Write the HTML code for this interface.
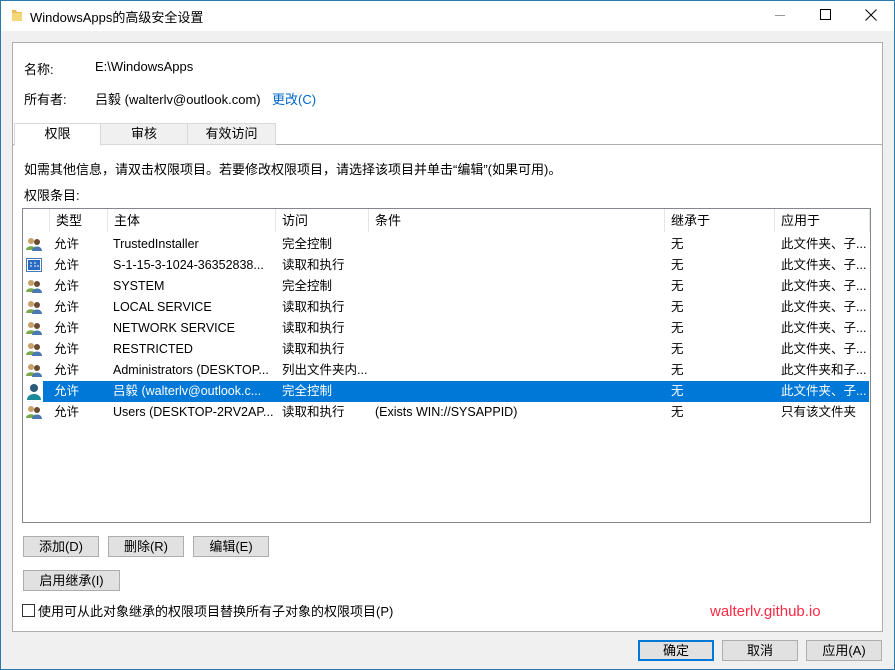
<!DOCTYPE html>
<html><head><meta charset="utf-8"><style>
*{box-sizing:border-box;margin:0;padding:0}
body{width:895px;height:670px;background:#f0f0f0;font-family:"Liberation Sans","Noto Sans CJK SC",sans-serif;font-size:13px;color:#000;position:relative;overflow:hidden}
.a{position:absolute;white-space:nowrap}
.win{position:absolute;left:0;top:0;width:895px;height:670px;border:1px solid #2b79a8}
.title{position:absolute;left:1px;top:1px;width:893px;height:30px;background:#fff}
.btn{position:absolute;height:21px;background:#e1e1e1;border:1px solid #adadad;text-align:center;line-height:19px}
.row{position:absolute;left:23px;width:846px;height:21px;line-height:21px;font-size:12.5px;white-space:nowrap}
.row span{position:absolute;white-space:nowrap}
.hd{position:absolute;top:0;height:23px;border-left:1px solid #e5e5e5;padding-left:6px;line-height:23px}
</style></head><body>
<div class="win"></div>
<div class="title"></div>
<svg class="a" style="left:11px;top:9px" width="12" height="13"><path d="M1 1h4l1 2h5v9H1z" fill="#e8c05a"/><path d="M1 4h10v8H1z" fill="#f5d77a"/></svg>
<div class="a" style="left:30px;top:7px">WindowsApps的高级安全设置</div>
<div class="a" style="left:775px;top:15px;width:10px;height:1px;background:#999"></div>
<div class="a" style="left:820px;top:9px;width:11px;height:11px;border:1px solid #000"></div>
<svg class="a" style="left:865px;top:9px" width="12" height="12"><path d="M0.5 0.5L11.5 11.5M11.5 0.5L0.5 11.5" stroke="#000" stroke-width="1"/></svg>

<div class="a" style="left:12px;top:42px;width:871px;height:590px;background:#fff;border:1px solid #adadad"></div>
<div class="a" style="left:24px;top:59px">名称:</div>
<div class="a" style="left:95px;top:59px">E:\WindowsApps</div>
<div class="a" style="left:24px;top:89px">所有者:</div>
<div class="a" style="left:95px;top:89px">吕毅 (walterlv@outlook.com)</div>
<div class="a" style="left:272px;top:89px;color:#0066cc">更改(C)</div>

<div class="a" style="left:13px;top:144px;width:869px;height:1px;background:#adadad"></div>
<div class="a" style="left:100px;top:123px;width:88px;height:22px;background:#f0f0f0;border:1px solid #d9d9d9;text-align:center;line-height:20px">审核</div>
<div class="a" style="left:187px;top:123px;width:89px;height:22px;background:#f0f0f0;border:1px solid #d9d9d9;text-align:center;line-height:20px">有效访问</div>
<div class="a" style="left:14px;top:123px;width:87px;height:23px;background:#fff;border:1px solid #d9d9d9;border-bottom:none;text-align:center;line-height:20px">权限</div>

<div class="a" style="left:24px;top:159px">如需其他信息，请双击权限项目。若要修改权限项目，请选择该项目并单击“编辑”(如果可用)。</div>
<div class="a" style="left:24px;top:185px">权限条目:</div>

<div class="a" style="left:22px;top:208px;width:849px;height:315px;background:#fff;border:1px solid #828790"></div>
<div class="a" style="left:23px;top:209px;width:847px;height:23px">
<div class="hd" style="left:26px;width:58px">类型</div>
<div class="hd" style="left:84px;width:169px">主体</div>
<div class="hd" style="left:252px;width:93px">访问</div>
<div class="hd" style="left:345px;width:296px">条件</div>
<div class="hd" style="left:641px;width:110px">继承于</div>
<div class="hd" style="left:751px;width:96px;border-right:1px solid #e5e5e5">应用于</div>
</div>

<div class="a" style="left:43px;top:381px;width:826px;height:21px;background:#0078d7"></div>

<div class="row" style="top:234px"><span style="left:3px;top:3px;width:16px;height:14px"><svg width="16" height="14"><circle cx="5" cy="4" r="3" fill="#c8a06a"/><path d="M0 13c0-5 10-5 10 0z" fill="#7aa84a"/><circle cx="11" cy="5" r="3" fill="#6a4a30"/><path d="M6 14c0-6 10-6 10 0z" fill="#4a78b0"/></svg></span><span style="left:31px">允许</span><span style="left:90px">TrustedInstaller</span><span style="left:259px">完全控制</span><span style="left:648px">无</span><span style="left:758px">此文件夹、子...</span></div>
<div class="row" style="top:255px"><span style="left:3px;top:3px"><svg width="16" height="14"><rect x="0.5" y="0.5" width="15" height="13" fill="#fff" stroke="#4a7ab0"/><rect x="2" y="2" width="12" height="10" fill="#2a6ac0"/><path d="M4 5h2M8 5h2M4 8h2M8 8h2M11 8h2" stroke="#fff"/></svg></span><span style="left:31px">允许</span><span style="left:90px">S-1-15-3-1024-36352838...</span><span style="left:259px">读取和执行</span><span style="left:648px">无</span><span style="left:758px">此文件夹、子...</span></div>
<div class="row" style="top:276px"><span style="left:3px;top:3px"><svg width="16" height="14"><circle cx="5" cy="4" r="3" fill="#c8a06a"/><path d="M0 13c0-5 10-5 10 0z" fill="#7aa84a"/><circle cx="11" cy="5" r="3" fill="#6a4a30"/><path d="M6 14c0-6 10-6 10 0z" fill="#4a78b0"/></svg></span><span style="left:31px">允许</span><span style="left:90px">SYSTEM</span><span style="left:259px">完全控制</span><span style="left:648px">无</span><span style="left:758px">此文件夹、子...</span></div>
<div class="row" style="top:297px"><span style="left:3px;top:3px"><svg width="16" height="14"><circle cx="5" cy="4" r="3" fill="#c8a06a"/><path d="M0 13c0-5 10-5 10 0z" fill="#7aa84a"/><circle cx="11" cy="5" r="3" fill="#6a4a30"/><path d="M6 14c0-6 10-6 10 0z" fill="#4a78b0"/></svg></span><span style="left:31px">允许</span><span style="left:90px">LOCAL SERVICE</span><span style="left:259px">读取和执行</span><span style="left:648px">无</span><span style="left:758px">此文件夹、子...</span></div>
<div class="row" style="top:318px"><span style="left:3px;top:3px"><svg width="16" height="14"><circle cx="5" cy="4" r="3" fill="#c8a06a"/><path d="M0 13c0-5 10-5 10 0z" fill="#7aa84a"/><circle cx="11" cy="5" r="3" fill="#6a4a30"/><path d="M6 14c0-6 10-6 10 0z" fill="#4a78b0"/></svg></span><span style="left:31px">允许</span><span style="left:90px">NETWORK SERVICE</span><span style="left:259px">读取和执行</span><span style="left:648px">无</span><span style="left:758px">此文件夹、子...</span></div>
<div class="row" style="top:339px"><span style="left:3px;top:3px"><svg width="16" height="14"><circle cx="5" cy="4" r="3" fill="#c8a06a"/><path d="M0 13c0-5 10-5 10 0z" fill="#7aa84a"/><circle cx="11" cy="5" r="3" fill="#6a4a30"/><path d="M6 14c0-6 10-6 10 0z" fill="#4a78b0"/></svg></span><span style="left:31px">允许</span><span style="left:90px">RESTRICTED</span><span style="left:259px">读取和执行</span><span style="left:648px">无</span><span style="left:758px">此文件夹、子...</span></div>
<div class="row" style="top:360px"><span style="left:3px;top:3px"><svg width="16" height="14"><circle cx="5" cy="4" r="3" fill="#c8a06a"/><path d="M0 13c0-5 10-5 10 0z" fill="#7aa84a"/><circle cx="11" cy="5" r="3" fill="#6a4a30"/><path d="M6 14c0-6 10-6 10 0z" fill="#4a78b0"/></svg></span><span style="left:31px">允许</span><span style="left:90px">Administrators (DESKTOP...</span><span style="left:259px">列出文件夹内...</span><span style="left:648px">无</span><span style="left:758px">此文件夹和子...</span></div>
<div class="row" style="top:381px;color:#fff"><span style="left:4px;top:2px"><svg width="14" height="17"><circle cx="7" cy="5" r="4" fill="#2a5a7a"/><path d="M0 17c0-8 14-8 14 0z" fill="#1a8a9a"/></svg></span><span style="left:31px">允许</span><span style="left:90px">吕毅 (walterlv@outlook.c...</span><span style="left:259px">完全控制</span><span style="left:648px">无</span><span style="left:758px">此文件夹、子...</span></div>
<div class="row" style="top:402px"><span style="left:3px;top:3px"><svg width="16" height="14"><circle cx="5" cy="4" r="3" fill="#c8a06a"/><path d="M0 13c0-5 10-5 10 0z" fill="#7aa84a"/><circle cx="11" cy="5" r="3" fill="#6a4a30"/><path d="M6 14c0-6 10-6 10 0z" fill="#4a78b0"/></svg></span><span style="left:31px">允许</span><span style="left:90px">Users (DESKTOP-2RV2AP...</span><span style="left:259px">读取和执行</span><span style="left:352px">(Exists WIN://SYSAPPID)</span><span style="left:648px">无</span><span style="left:758px">只有该文件夹</span></div>

<div class="btn" style="left:23px;top:536px;width:76px">添加(D)</div>
<div class="btn" style="left:108px;top:536px;width:76px">删除(R)</div>
<div class="btn" style="left:193px;top:536px;width:76px">编辑(E)</div>
<div class="btn" style="left:23px;top:570px;width:97px">启用继承(I)</div>
<div class="a" style="left:22px;top:604px;width:13px;height:13px;border:1px solid #333;background:#fff"></div>
<div class="a" style="left:38px;top:601px">使用可从此对象继承的权限项目替换所有子对象的权限项目(P)</div>
<div class="a" style="left:710px;top:603px;color:#ff2a44;font-size:15px">walterlv.github.io</div>

<div class="btn" style="left:638px;top:640px;width:76px;border:2px solid #0078d7;line-height:17px">确定</div>
<div class="btn" style="left:722px;top:640px;width:76px">取消</div>
<div class="btn" style="left:806px;top:640px;width:76px">应用(A)</div>
</body></html>
